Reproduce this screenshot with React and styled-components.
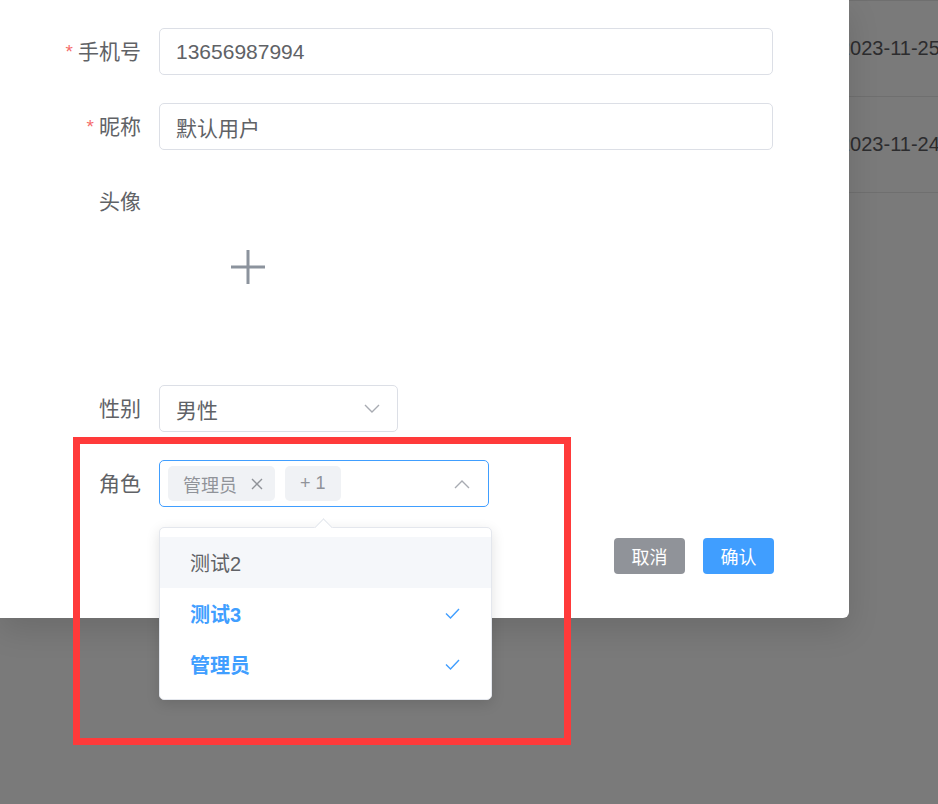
import React from "react";
import styled, { createGlobalStyle } from "styled-components";

const GlobalStyle = createGlobalStyle`
  html, body {
    margin: 0;
    padding: 0;
    background: #7a7a7a;
  }
  body {
    font-family: "Liberation Sans", "Noto Sans CJK SC", sans-serif;
  }
  * {
    box-sizing: border-box;
  }
`;

// whole viewport
const Page = styled.div`
  position: relative;
  width: 938px;
  height: 804px;
  overflow: hidden;
  display: flex;
  align-items: flex-start;
  background: #7a7a7a;
`;

// the dialog that holds the form
const Dialog = styled.div`
  position: relative;
  width: 849px;
  flex-shrink: 0;
  background: #fff;
  border-bottom-right-radius: 6px;
  box-shadow: 0 12px 32px rgba(0, 0, 0, 0.12);
  padding: 28px 75px 44px 0;
  z-index: 2;
`;

// the table peeking out behind the mask
const TableStrip = styled.div`
  flex: 1;
  overflow: hidden;
  border-top: 1px solid #6f6f6f;
`;

const TableRow = styled.div`
  height: 96px;
  display: flex;
  align-items: center;
  border-bottom: 1px solid #6f6f6f;
  font-size: 20px;
  color: #2c2c2e;
  white-space: nowrap;

  span {
    margin-left: -10px;
  }
`;

const FormRow = styled.div`
  display: flex;
  gap: 18px;
  margin-bottom: ${(p) => p.$gap ?? 28}px;
`;

const Label = styled.label`
  width: 141px;
  height: 47px;
  flex-shrink: 0;
  display: flex;
  align-items: center;
  justify-content: flex-end;
  font-size: 21px;
  line-height: 1;
  color: #606266;
`;

const Star = styled.span`
  color: #f56c6c;
  font-size: 19px;
  line-height: 1;
  margin-right: 5px;
`;

const Input = styled.div`
  width: ${(p) => p.$width || 614}px;
  height: 47px;
  border: 1px solid ${(p) => (p.$active ? "#409eff" : "#dcdfe6")};
  border-radius: 5px;
  padding: 0 17px 0 16px;
  display: flex;
  align-items: center;
  font-size: 21px;
  color: #606266;
  background: #fff;
`;

const InputText = styled.span`
  flex: 1;
`;

const Upload = styled.div`
  width: 178px;
  height: 178px;
  display: flex;
  align-items: center;
  justify-content: center;
`;

const SelectWrap = styled.div`
  position: relative;
`;

const TagSelect = styled(Input)`
  padding: 0 18px 0 8px;
  gap: 10px;
`;

const Tag = styled.span`
  height: 35px;
  display: inline-flex;
  align-items: center;
  gap: 14px;
  padding: 0 12px 0 15px;
  border-radius: 5px;
  background: #f0f2f5;
  color: #909399;
  font-size: 18px;
  padding-right: ${(p) => (p.$count ? 15 : 12)}px;
`;

const Spacer = styled.span`
  flex: 1;
`;

const Dropdown = styled.div`
  position: absolute;
  left: 0;
  top: 67px;
  width: 333px;
  padding: 9px 0;
  background: #fff;
  border: 1px solid #e4e7ed;
  border-radius: 5px;
  box-shadow: 0 4px 14px rgba(0, 0, 0, 0.12);
  z-index: 3;

  &::before {
    content: "";
    position: absolute;
    top: -7px;
    left: 157px;
    width: 12px;
    height: 12px;
    background: #fff;
    border-left: 1px solid #e4e7ed;
    border-top: 1px solid #e4e7ed;
    transform: rotate(45deg);
  }
`;

const Option = styled.div`
  height: 51px;
  display: flex;
  align-items: center;
  justify-content: space-between;
  padding: 0 31px 0 30px;
  font-size: 20px;
  color: ${(p) => (p.$selected ? "#409eff" : "#606266")};
  font-weight: ${(p) => (p.$selected ? 700 : 400)};
  background: ${(p) => (p.$hover ? "#f5f7fa" : "transparent")};
`;

const Footer = styled.div`
  display: flex;
  justify-content: flex-end;
  gap: 18px;
  margin-top: 31px;
`;

const Button = styled.button`
  width: 71px;
  height: 36px;
  border: none;
  border-radius: 4px;
  font-family: inherit;
  font-size: 18px;
  color: #fff;
  background: ${(p) => (p.$primary ? "#409eff" : "#909399")};
  padding: 0;
`;

// annotation box drawn over the screenshot
const Highlight = styled.div`
  position: absolute;
  left: 73px;
  top: 437px;
  width: 498px;
  height: 308px;
  border: 7px solid #ff3a3a;
  z-index: 5;
  pointer-events: none;
`;

const Chevron = ({ up }) => (
  <svg width="16" height="10" viewBox="0 0 16 10" fill="none">
    <path
      d={up ? "M1 9 L8 2 L15 9" : "M1 1 L8 8 L15 1"}
      stroke="#a8abb2"
      strokeWidth="1.4"
    />
  </svg>
);

const Close = () => (
  <svg width="12" height="12" viewBox="0 0 12 12">
    <path d="M1 1 L11 11 M11 1 L1 11" stroke="#909399" strokeWidth="1.4" />
  </svg>
);

const Check = () => (
  <svg width="15" height="11" viewBox="0 0 15 11" fill="none">
    <path d="M1 5.5 L5.5 10 L14 1" stroke="#409eff" strokeWidth="1.4" />
  </svg>
);

const Plus = () => (
  <svg width="34" height="34" viewBox="0 0 34 34">
    <path d="M17 0 V34 M0 17 H34" stroke="#8c939d" strokeWidth="3" />
  </svg>
);

const options = [
  { label: "测试2", hover: true },
  { label: "测试3", selected: true },
  { label: "管理员", selected: true },
];

export default function App() {
  return (
    <>
      <GlobalStyle />
      <Page>
        <Dialog>
          <FormRow>
            <Label>
              <Star>*</Star>手机号
            </Label>
            <Input>13656987994</Input>
          </FormRow>
          <FormRow>
            <Label>
              <Star>*</Star>昵称
            </Label>
            <Input>默认用户</Input>
          </FormRow>
          <FormRow $gap={29}>
            <Label>头像</Label>
            <Upload>
              <Plus />
            </Upload>
          </FormRow>
          <FormRow>
            <Label>性别</Label>
            <Input $width={239}>
              <InputText>男性</InputText>
              <Chevron />
            </Input>
          </FormRow>
          <FormRow $gap={0}>
            <Label>角色</Label>
            <SelectWrap>
              <TagSelect $width={330} $active>
                <Tag>
                  管理员
                  <Close />
                </Tag>
                <Tag $count>+ 1</Tag>
                <Spacer />
                <Chevron up />
              </TagSelect>
              <Dropdown>
                {options.map((o) => (
                  <Option key={o.label} $hover={o.hover} $selected={o.selected}>
                    {o.label}
                    {o.selected && <Check />}
                  </Option>
                ))}
              </Dropdown>
            </SelectWrap>
          </FormRow>
          <Footer>
            <Button>取消</Button>
            <Button $primary>确认</Button>
          </Footer>
        </Dialog>
        <TableStrip>
          <TableRow>
            <span>2023-11-25</span>
          </TableRow>
          <TableRow>
            <span>2023-11-24</span>
          </TableRow>
        </TableStrip>
        <Highlight />
      </Page>
    </>
  );
}
